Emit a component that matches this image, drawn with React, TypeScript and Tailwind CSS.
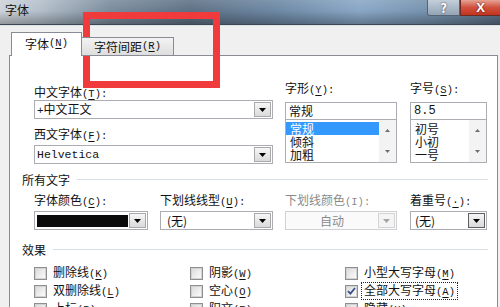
import type { ReactNode } from "react";

const cjk = "[font-family:'Noto_Sans_CJK_SC','Noto_Sans',sans-serif]";

// half-width accelerator like "(K)" drawn at 6px per character
function Acc({ k, colon, dim }: { k: string; colon?: boolean; dim?: boolean }) {
  return (
    <span className={`text-[10.5px] [font-family:'Liberation_Mono',monospace] ${dim ? "" : ""}`}>
      (<span className="underline underline-offset-2">{k}</span>){colon ? ":" : ""}
    </span>
  );
}

function DropButton({ disabled, focus }: { disabled?: boolean; focus?: boolean }) {
  return (
    <div
      className={`flex h-[15px] w-[17px] shrink-0 items-center justify-center border ${
        disabled
          ? "border-[#d4d4d4] bg-[#f4f4f4]"
          : focus
            ? "border-[#5f5f5f] bg-[linear-gradient(to_bottom,#f6f6f6,#d9d9d9)]"
            : "border-[#a9a9a9] bg-[linear-gradient(to_bottom,#f6f6f6,#dadada)]"
      }`}
    >
      <svg width="7" height="4" viewBox="0 0 7 4">
        <path d="M0 0h7L3.5 4z" fill={disabled ? "#a5a5a5" : "#000"} />
      </svg>
    </div>
  );
}

function ScrollCol() {
  return (
    <div className="flex w-[17px] shrink-0 flex-col bg-[#f3f3f3]">
      <div className="flex flex-1 items-center justify-center">
        <svg width="5" height="3" viewBox="0 0 5 3">
          <path d="M2.5 0L5 3H0z" fill="#6d6d6d" />
        </svg>
      </div>
      <div className="flex flex-1 items-center justify-center">
        <svg width="5" height="3" viewBox="0 0 5 3">
          <path d="M0 0h5L2.5 3z" fill="#6d6d6d" />
        </svg>
      </div>
    </div>
  );
}

function Check({ checked }: { checked?: boolean }) {
  return (
    <div className="flex h-[13px] w-[13px] shrink-0 items-center justify-center border border-[#8e8f8f] bg-[#f4f4f4]">
      <div className="flex h-[11px] w-[11px] items-center justify-center border border-[#d2d2d2] bg-[linear-gradient(135deg,#dcdcdc,#fbfbfb)]">
        {checked && (
          <svg width="9" height="8" viewBox="0 0 9 8">
            <path d="M1 4.2L3.4 6.6L8 1" stroke="#3b4f8c" strokeWidth="1.8" fill="none" />
          </svg>
        )}
      </div>
    </div>
  );
}

function SectionHead({ title }: { title: string }) {
  return (
    <div className="flex h-[13px] items-center gap-[7px] leading-[13px]">
      <span>{title}</span>
      <div className="h-px flex-1 bg-[#d5dfe5]" />
    </div>
  );
}

function CheckRow({ label, k, checked, focus, tight }: { label: string; k: string; checked?: boolean; focus?: boolean; tight?: boolean }) {
  return (
    <div className={`flex h-[18px] items-center ${tight ? "gap-[3px]" : "gap-[6px]"}`}>
      <Check checked={checked} />
      <span
        className={`whitespace-nowrap leading-[14px] ${tight ? "border px-[2px]" : ""} ${
          focus ? "border-dotted border-[#222]" : "border-transparent"
        }`}
      >
        {label}
        <Acc k={k} />
      </span>
    </div>
  );
}

export default function App() {
  return (
    <div className={`relative h-[307px] w-[500px] overflow-hidden bg-[#f0f0f0] text-[12px] text-[#111] ${cjk}`}>
      {/* Title bar */}
      <div className="relative h-[25px] border-b border-[#3b4754] bg-[linear-gradient(to_bottom,rgba(255,255,255,0.12)_0%,rgba(0,0,0,0)_45%,rgba(0,0,0,0.28)_100%),linear-gradient(to_right,#cdd3d9_0%,#b3bfca_8%,#7b8c9d_22%,#5e7185_38%,#6d88a4_55%,#89a7c6_72%,#7591ad_86%,#5b6f84_100%)]">
        <span className="absolute left-[5px] top-[3px] leading-[13px] text-[#111]">字体</span>
        <div className="absolute right-[40px] top-0 flex h-[16px] w-[33px] items-center justify-center rounded-bl-[3px] border border-t-0 border-[#556474] bg-[linear-gradient(to_bottom,#c3ced9,#93a4b5)] text-[13px] font-bold leading-none text-white [text-shadow:0_0_2px_#334]">
          ?
        </div>
        <div className="absolute right-0 top-0 flex h-[16px] w-[40px] items-center justify-center border border-t-0 border-r-0 border-[#6e2a22] bg-[linear-gradient(to_bottom,#e6a394,#d0503d_50%,#c2351f)] text-[13px] font-bold leading-none text-white [font-family:'Liberation_Sans',sans-serif] [text-shadow:0_0_2px_#511]">
          X
        </div>
      </div>
      <div className="h-px bg-[#dde2e7]" />

      {/* Tabs */}
      <div className="ml-[9px] mt-[6px] w-[489px]">
        <div className="relative z-10 -mb-px flex h-[24px] items-end pl-[2px]">
          <div className="flex h-[24px] w-[71px] items-center justify-center border border-b-0 border-[#898c95] bg-white pb-[2px]">
            字体<Acc k="N" />
          </div>
          <div className="flex h-[19px] w-[92px] items-center justify-center border border-l-0 border-[#898c95] bg-[linear-gradient(to_bottom,#f3f3f3,#dddddd)]">
            字符间距<Acc k="R" />
          </div>
        </div>

        {/* Panel */}
        <div className="h-[260px] border border-[#898c95] bg-white pl-[12px] pr-[9px]">
          {/* Font selectors */}
          <div className="ml-[12px] mt-[25px] flex">
            <div className="w-[239px]">
              <div className="mt-[4px] h-[13px] leading-[13px]">
                中文字体<Acc k="T" colon />
              </div>
              <div className="mt-[2px] flex h-[19px] items-center justify-between border border-[#abadb3] pl-[2px] pr-px">
                <span>
                  <span className="text-[11px] [font-family:'Liberation_Mono',monospace]">+</span>中文正文
                </span>
                <DropButton />
              </div>
              <div className="mt-[8px] h-[13px] leading-[13px]">
                西文字体<Acc k="F" colon />
              </div>
              <div className="mt-[5px] flex h-[19px] items-center justify-between border border-[#abadb3] pl-[2px] pr-px">
                <span className="text-[11.5px] [font-family:'Liberation_Mono',monospace]">Helvetica</span>
                <DropButton />
              </div>
            </div>

            <div className="ml-[12px] w-[112px]">
              <div className="h-[13px] leading-[13px]">
                字形<Acc k="Y" colon />
              </div>
              <div className="mt-[8px] flex h-[18px] items-center border border-[#abadb3] pl-[3px]">常规</div>
              <div className="flex h-[43px] border border-t-0 border-[#abadb3]">
                <div className="flex-1 pt-[2px] leading-[13px]">
                  <div className="h-[13px] bg-[#3399ff] pl-[4px] text-white">常规</div>
                  <div className="h-[13px] pl-[4px]">倾斜</div>
                  <div className="h-[13px] pl-[4px]">加粗</div>
                </div>
                <ScrollCol />
              </div>
            </div>

            <div className="ml-[13px] w-[77px]">
              <div className="h-[13px] leading-[13px]">
                字号<Acc k="S" colon />
              </div>
              <div className="mt-[8px] flex h-[18px] items-center border border-[#abadb3] pl-[3px] text-[12px] [font-family:'Liberation_Mono',monospace]">
                8.5
              </div>
              <div className="flex h-[43px] border border-t-0 border-[#abadb3]">
                <div className="flex-1 pt-[2px] leading-[13px]">
                  <div className="h-[13px] pl-[4px]">初号</div>
                  <div className="h-[13px] pl-[4px]">小初</div>
                  <div className="h-[13px] pl-[4px]">一号</div>
                </div>
                <ScrollCol />
              </div>
            </div>
          </div>

          {/* All text */}
          <div className="mt-[9px]">
            <SectionHead title="所有文字" />
          </div>
          <div className="ml-[12px] mt-[7px] flex">
            <div className="w-[114px]">
              <div className="h-[13px] leading-[13px]">
                字体颜色<Acc k="C" colon />
              </div>
              <div className="mt-[5px] flex h-[19px] items-center justify-between border border-[#abadb3] pl-[2px] pr-px">
                <div className="h-[12px] w-[91px] bg-[#0a0a0a]" />
                <DropButton />
              </div>
            </div>
            <div className="ml-[12px] w-[113px]">
              <div className="h-[13px] whitespace-nowrap leading-[13px]">
                下划线线型<Acc k="U" colon />
              </div>
              <div className="mt-[5px] flex h-[19px] items-center justify-between border border-[#abadb3] pl-[6px] pr-px">
                <span>(无)</span>
                <DropButton />
              </div>
            </div>
            <div className="ml-[12px] w-[112px]">
              <div className="h-[13px] whitespace-nowrap leading-[13px] text-[#8a8a8a]">
                下划线颜色
                <span className="text-[10.5px] [font-family:'Liberation_Mono',monospace]">(I):</span>
              </div>
              <div className="mt-[5px] flex h-[19px] items-center border border-[#cfd1d4] bg-[#fafafa] pr-px">
                <span className="flex-1 text-center text-[#8a8a8a]">自动</span>
                <DropButton disabled />
              </div>
            </div>
            <div className="ml-[13px] w-[77px]">
              <div className="h-[13px] whitespace-nowrap leading-[13px]">
                着重号<Acc k="·" colon />
              </div>
              <div className="mt-[5px] flex h-[19px] items-center justify-between border border-[#abadb3] pl-[4px] pr-px">
                <span>(无)</span>
                <DropButton focus />
              </div>
            </div>
          </div>

          {/* Effects */}
          <div className="mt-[13px]">
            <SectionHead title="效果" />
          </div>
          <div className="ml-[12px] mt-[8px] flex">
            <div className="w-[156px]">
              <CheckRow label="删除线" k="K" />
              <CheckRow label="双删除线" k="L" />
              <CheckRow label="上标" k="P" />
            </div>
            <div className="w-[155px]">
              <CheckRow label="阴影" k="W" />
              <CheckRow label="空心" k="O" />
              <CheckRow label="阳文" k="E" />
            </div>
            <div>
              <CheckRow label="小型大写字母" k="M" tight />
              <CheckRow label="全部大写字母" k="A" checked focus tight />
              <CheckRow label="隐藏" k="H" tight />
            </div>
          </div>
        </div>
      </div>

      {/* Red annotation frame */}
      <div className="pointer-events-none absolute left-[83px] top-[12px] h-[76px] w-[137px] border-[7px] border-[#f03a3c]" />
    </div>
  );
}
